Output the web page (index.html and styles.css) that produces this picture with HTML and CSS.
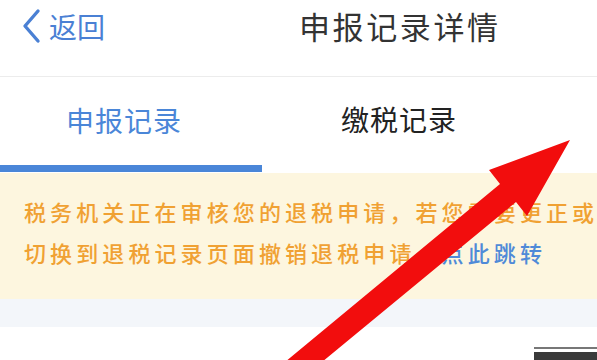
FILE: index.html
```html
<!DOCTYPE html>
<html lang="zh-CN">
<head>
<meta charset="utf-8">
<title>申报记录详情</title>
<link rel="stylesheet" href="styles.css">
</head>
<body>
<div class="page">
  <header class="header">
    <a class="back">
      <svg class="chev" width="22" height="36" viewBox="0 0 22 36"><path d="M18 3 L5 18 L18 33" fill="none" stroke="#4a80d4" stroke-width="3.4" stroke-linecap="round" stroke-linejoin="round"/></svg>
      <span class="back-text">返回</span>
    </a>
    <h1 class="title">申报记录详情</h1>
  </header>
  <nav class="tabs">
    <div class="tab tab-active"><span>申报记录</span></div>
    <div class="tab tab-other"><span>缴税记录</span></div>
  </nav>
  <section class="notice">
    <p class="notice-line">税务机关正在审核您的退税申请，若您需要更正或作</p>
    <p class="notice-line">切换到退税记录页面撤销退税申请，<span class="link">点此跳转</span></p>
  </section>
  <div class="band"></div>
  <div class="row">
    <span class="row-label">缴税信息</span>
    <span class="row-btn"></span>
  </div>
  <svg class="arrow" width="597" height="360" viewBox="0 0 597 360">
    <polygon points="570,140 489,170 500,184 250,391 265,409 516,202 527,216" fill="#f20d0d"/>
  </svg>
</div>
</body>
</html>
```
FILE: styles.css
```css
html, body {
  margin: 0;
  padding: 0;
  background: #ffffff;
}
body {
  font-family: "Noto Sans CJK SC", "Noto Sans", sans-serif;
  width: 597px;
  height: 360px;
  overflow: hidden;
}
.page {
  position: relative;
  width: 597px;
  height: 360px;
  overflow: hidden;
}
.header {
  height: 76px;
  border-bottom: 1px solid #ececec;
  display: flex;
  align-items: center;
  position: relative;
}
.back {
  display: flex;
  align-items: center;
  margin-left: 20px;
  margin-top: -24px;
  color: #4a80d4;
}
.chev {
  display: block;
}
.back-text {
  font-size: 28px;
  line-height: 36px;
  margin-left: 7px;
}
.title {
  margin: 0 0 0 194px;
  margin-top: -24px;
  font-size: 31px;
  font-weight: 400;
  letter-spacing: 2.6px;
  color: #333333;
  line-height: 40px;
}
.tabs {
  display: flex;
  height: 95px;
}
.tab {
  width: 262px;
  box-sizing: border-box;
  display: flex;
  align-items: center;
  justify-content: center;
  font-size: 28px;
  letter-spacing: 1px;
}
.tab span {
  margin-top: -3px;
}
.tab-active {
  color: #4a86d8;
  border-bottom: 7px solid #4a86d8;
  padding-right: 14px;
  padding-top: 1px;
}
.tab-other {
  color: #222222;
  padding-left: 12px;
  padding-bottom: 8px;
}
.notice {
  margin-top: 1px;
  height: 126px;
  box-sizing: border-box;
  background: #fdf6df;
  padding: 18px 0 0 24px;
  overflow: hidden;
}
.notice-line {
  margin: 0;
  white-space: nowrap;
  font-size: 22px;
  font-weight: 500;
  line-height: 41px;
  letter-spacing: 4.1px;
  color: #f0a133;
}
.link {
  color: #4f8ad8;
}
.band {
  height: 28px;
  background: #f3f6fa;
}
.row {
  height: 40px;
  display: flex;
  justify-content: space-between;
  align-items: flex-start;
  background: #ffffff;
}
.row-label {
  margin-left: 48px;
  margin-top: 28px;
  font-size: 28px;
  line-height: 36px;
  color: #333333;
}
.row-btn {
  margin-top: 20px;
  width: 63px;
  height: 14px;
  border-top: 2px solid #777777;
  background: linear-gradient(#ffffff 0, #ffffff 3px, #3a3a3a 3px);
}
.arrow {
  position: absolute;
  left: 0;
  top: 0;
  pointer-events: none;
}
```
